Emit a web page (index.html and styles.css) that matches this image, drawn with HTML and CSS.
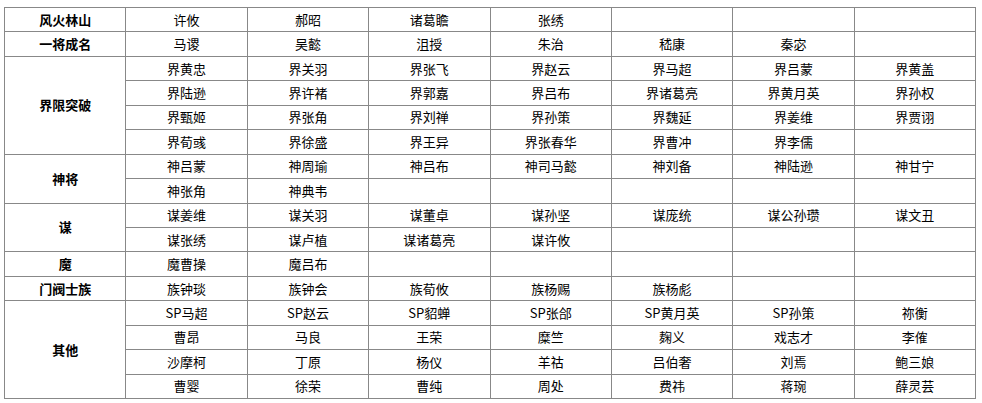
FILE: index.html
```html
<!DOCTYPE html>
<html lang="zh">
<head>
<meta charset="utf-8">
<link rel="stylesheet" href="styles.css">
</head>
<body>
<table class="grid">
<colgroup><col><col><col><col><col><col><col><col></colgroup>
<tbody>
<tr><th>风火林山</th><td>许攸</td><td>郝昭</td><td>诸葛瞻</td><td>张绣</td><td></td><td></td><td></td></tr>
<tr><th>一将成名</th><td>马谡</td><td>吴懿</td><td>沮授</td><td>朱治</td><td>嵇康</td><td>秦宓</td><td></td></tr>
<tr><th rowspan="4">界限突破</th><td>界黄忠</td><td>界关羽</td><td>界张飞</td><td>界赵云</td><td>界马超</td><td>界吕蒙</td><td>界黄盖</td></tr>
<tr><td>界陆逊</td><td>界许褚</td><td>界郭嘉</td><td>界吕布</td><td>界诸葛亮</td><td>界黄月英</td><td>界孙权</td></tr>
<tr><td>界甄姬</td><td>界张角</td><td>界刘禅</td><td>界孙策</td><td>界魏延</td><td>界姜维</td><td>界贾诩</td></tr>
<tr><td>界荀彧</td><td>界徐盛</td><td>界王异</td><td>界张春华</td><td>界曹冲</td><td>界李儒</td><td></td></tr>
<tr><th rowspan="2">神将</th><td>神吕蒙</td><td>神周瑜</td><td>神吕布</td><td>神司马懿</td><td>神刘备</td><td>神陆逊</td><td>神甘宁</td></tr>
<tr><td>神张角</td><td>神典韦</td><td></td><td></td><td></td><td></td><td></td></tr>
<tr><th rowspan="2">谋</th><td>谋姜维</td><td>谋关羽</td><td>谋董卓</td><td>谋孙坚</td><td>谋庞统</td><td>谋公孙瓒</td><td>谋文丑</td></tr>
<tr><td>谋张绣</td><td>谋卢植</td><td>谋诸葛亮</td><td>谋许攸</td><td></td><td></td><td></td></tr>
<tr><th>魔</th><td>魔曹操</td><td>魔吕布</td><td></td><td></td><td></td><td></td><td></td></tr>
<tr><th>门阀士族</th><td>族钟琰</td><td>族钟会</td><td>族荀攸</td><td>族杨赐</td><td>族杨彪</td><td></td><td></td></tr>
<tr><th rowspan="4">其他</th><td>SP马超</td><td>SP赵云</td><td>SP貂蝉</td><td>SP张郃</td><td>SP黄月英</td><td>SP孙策</td><td>祢衡</td></tr>
<tr><td>曹昂</td><td>马良</td><td>王荣</td><td>糜竺</td><td>麹义</td><td>戏志才</td><td>李傕</td></tr>
<tr><td>沙摩柯</td><td>丁原</td><td>杨仪</td><td>羊祜</td><td>吕伯奢</td><td>刘焉</td><td>鲍三娘</td></tr>
<tr><td>曹婴</td><td>徐荣</td><td>曹纯</td><td>周处</td><td>费祎</td><td>蒋琬</td><td>薛灵芸</td></tr>
</tbody>
</table>
</body>
</html>
```
FILE: styles.css
```css
html, body {
  margin: 0;
  padding: 0;
  background: #ffffff;
}
body {
  padding: 7px 0 0 4px;
  font-family: "Microsoft YaHei", "Noto Sans CJK SC", "Noto Sans", sans-serif;
  font-size: 13px;
  color: #000000;
}
.grid {
  border-collapse: collapse;
  table-layout: fixed;
  width: 972px;
  height: 392px;
}
.grid th,
.grid td {
  border: 1px solid #888888;
  padding: 0;
  text-align: center;
  vertical-align: middle;
  line-height: 16px;
  white-space: nowrap;
  overflow: hidden;
}
.grid th {
  font-weight: bold;
}
```
